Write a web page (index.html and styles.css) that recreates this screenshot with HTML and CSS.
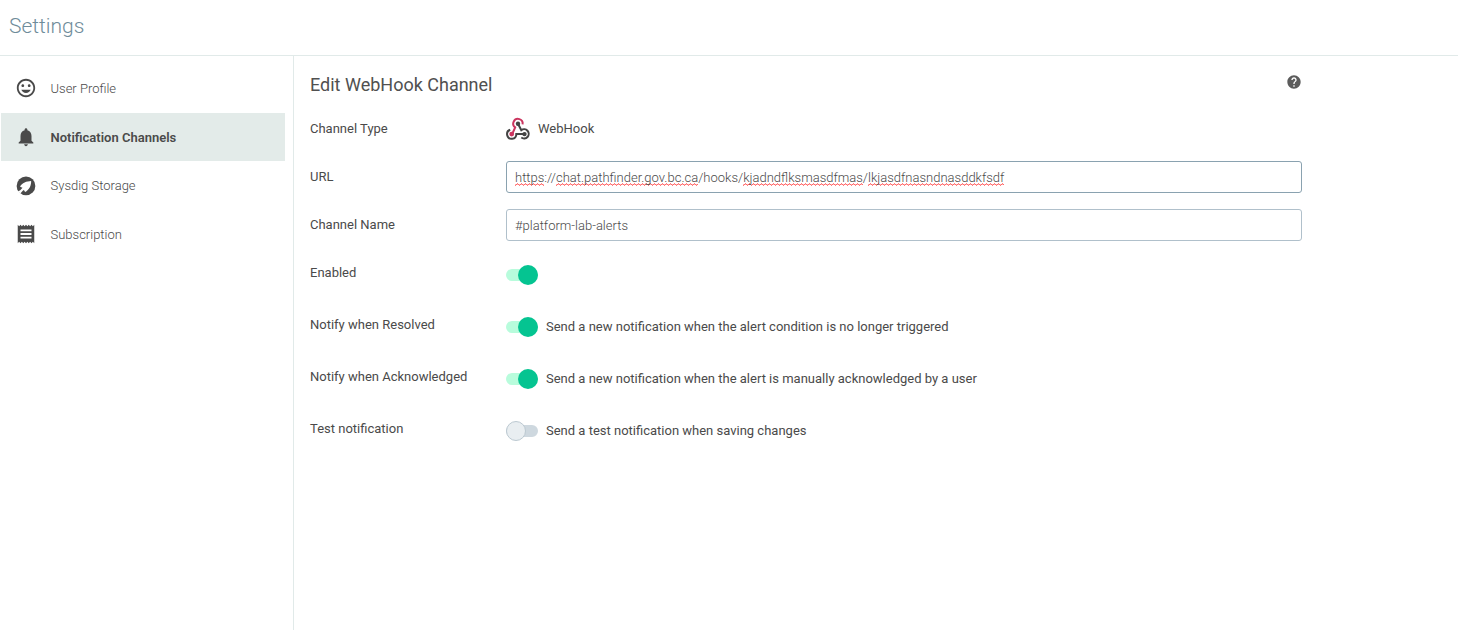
FILE: index.html
```html
<!DOCTYPE html>
<html lang="en">
<head>
<meta charset="utf-8">
<title>Settings</title>
<link rel="stylesheet" href="styles.css">
</head>
<body>
<header class="header"><h1 class="header-title">Settings</h1></header>
<div class="layout">
  <nav class="sidebar">
    <a class="nav-item">
      <svg class="nav-icon" viewBox="0 0 24 24"><path d="M11.99 2C6.47 2 2 6.48 2 12s4.47 10 9.99 10C17.52 22 22 17.52 22 12S17.52 2 11.99 2zM12 20c-4.42 0-8-3.58-8-8s3.58-8 8-8 8 3.58 8 8-3.58 8-8 8zm3.5-9c.83 0 1.5-.67 1.5-1.5S16.330 8 15.500 8 14 8.670 14 9.500s.67 1.500 1.500 1.500zm-7 0c.83 0 1.500-.67 1.500-1.500S9.330 8 8.500 8 7 8.670 7 9.500 7.670 11 8.500 11zM12 17.500c2.330 0 4.310-1.460 5.110-3.500H6.890c.8 2.040 2.780 3.500 5.110 3.500z"/></svg>
      <span class="nav-text">User Profile</span>
    </a>
    <a class="nav-item nav-item-active">
      <svg class="nav-icon" viewBox="0 0 24 24"><path d="M12 22c1.100 0 2-.9 2-2h-4c0 1.100.89 2 2 2zm6-6v-5c0-3.070-1.640-5.640-4.500-6.320V4c0-.83-.67-1.500-1.500-1.500s-1.500.67-1.500 1.500v.68C7.630 5.360 6 7.920 6 11v5l-2 2v1h16v-1l-2-2z"/></svg>
      <span class="nav-text">Notification Channels</span>
    </a>
    <a class="nav-item">
      <svg class="nav-icon" viewBox="0 0 24 24"><circle cx="12" cy="13" r="10.200"/><path class="cutout" d="M17.600 7.600C12.700 7.800 7.600 9.500 5.500 13.800L8.200 14.900 5.700 17.800 3.100 19 5.800 21.200 8.500 18.300 9.700 17.500 11 19.700C15.500 17.300 17.800 12.500 17.600 7.600z"/></svg>
      <span class="nav-text">Sysdig Storage</span>
    </a>
    <a class="nav-item">
      <svg class="nav-icon" viewBox="0 0 24 24"><path d="M18 17H6v-2h12v2zm0-4H6v-2h12v2zm0-4H6V7h12v2zM3 22l1.500-1.500L6 22l1.500-1.500L9 22l1.500-1.500L12 22l1.500-1.500L15 22l1.500-1.500L18 22l1.500-1.500L21 22V2l-1.500 1.500L18 2l-1.500 1.500L15 2l-1.500 1.500L12 2l-1.500 1.500L9 2 7.500 3.500 6 2 4.500 3.500 3 2v20z"/></svg>
      <span class="nav-text">Subscription</span>
    </a>
  </nav>
  <main class="content">
    <div class="content-head">
      <h2 class="content-title">Edit WebHook Channel</h2>
      <svg class="help-icon" viewBox="0 0 24 24"><path d="M12 2C6.480 2 2 6.480 2 12s4.480 10 10 10 10-4.480 10-10S17.520 2 12 2zm1 17h-2v-2h2v2zm2.070-7.750l-.9.920C13.450 12.900 13 13.500 13 15h-2v-.5c0-1.100.45-2.100 1.170-2.830l1.240-1.260c.37-.36.59-.86.59-1.410 0-1.100-.9-2-2-2s-2 .9-2 2H8c0-2.210 1.790-4 4-4s4 1.790 4 4c0 .88-.36 1.680-.93 2.250z"/></svg>
    </div>
    <div class="row">
      <div class="label">Channel Type</div>
      <div class="channel-type">
        <svg class="webhook-icon" viewBox="0 0 24 24">
          <path class="hook-pink" d="M16.600 6.300A4.700 4.700 0 1 0 9.200 9.400L6.200 16"/>
          <path class="hook-dark" d="M12 5.700L15.300 12.200A4.600 4.600 0 1 1 15.300 19.500"/>
          <path class="hook-dark" d="M4.200 11.800A4.600 4.600 0 1 0 10.300 16.100H18.500"/>
          <circle class="node-dark" cx="12" cy="5.700" r="2.200"/>
          <circle class="node-pink" cx="5.700" cy="16.100" r="2.400"/>
          <circle class="node-dark" cx="18.500" cy="16.100" r="2.200"/>
        </svg>
        <span>WebHook</span>
      </div>
    </div>
    <div class="row">
      <div class="label">URL</div>
      <div class="field field-focused"><span class="misspelled">https</span>://<span class="misspelled">chat.pathfinder.gov.bc.ca</span>/hooks/<span class="misspelled">kjadndflksmasdfmas</span>/<span class="misspelled">lkjasdfnasndnasddkfsdf</span></div>
    </div>
    <div class="row">
      <div class="label">Channel Name</div>
      <div class="field">#platform-lab-alerts</div>
    </div>
    <div class="row row-toggle">
      <div class="label">Enabled</div>
      <div class="toggle-line"><span class="toggle toggle-on"><span class="knob"></span></span></div>
    </div>
    <div class="row row-toggle">
      <div class="label">Notify when Resolved</div>
      <div class="toggle-line"><span class="toggle toggle-on"><span class="knob"></span></span><span>Send a new notification when the alert condition is no longer triggered</span></div>
    </div>
    <div class="row row-toggle">
      <div class="label">Notify when Acknowledged</div>
      <div class="toggle-line"><span class="toggle toggle-on"><span class="knob"></span></span><span>Send a new notification when the alert is manually acknowledged by a user</span></div>
    </div>
    <div class="row row-toggle">
      <div class="label">Test notification</div>
      <div class="toggle-line"><span class="toggle"><span class="knob"></span></span><span>Send a test notification when saving changes</span></div>
    </div>
  </main>
</div>
</body>
</html>
```
FILE: styles.css
```css
* { box-sizing: border-box; }
body {
  margin: 0;
  height: 100vh;
  display: flex;
  flex-direction: column;
  overflow: hidden;
  background: #fff;
  color: #4a4a4a;
  font-family: Roboto, sans-serif;
  font-size: 13px;
  line-height: 20px;
}
.header {
  height: 56px;
  flex: none;
  padding: 12px 9px 0;
  border-bottom: 1px solid #e1eae9;
}
.header-title {
  margin: 0;
  font-size: 21px;
  line-height: 28px;
  font-weight: 300;
  color: #6f8c9a;
}
.layout { flex: 1; display: flex; min-height: 0; }
.sidebar {
  width: 294px;
  flex: none;
  padding: 8px 8px 0 1px;
  border-right: 1px solid #e1eae9;
}
.nav-item {
  display: flex;
  align-items: center;
  height: 48px;
  margin-bottom: 0.7px;
  padding-left: 14px;
  gap: 13.500px;
  font-weight: 300;
}
.nav-item-active { background: #e3ebe9; font-weight: 600; }
.nav-text { padding-top: 2px; }
.nav-icon { width: 22px; height: 22px; fill: #4a4a4a; }
.cutout { fill: #fff; }
.content { width: 1008px; padding: 16px 0 0 16px; }
.content-head {
  display: flex;
  justify-content: space-between;
  height: 47px;
}
.content-title { margin: 0; font-size: 18px; line-height: 26px; font-weight: 400; color: #505050; }
.help-icon { width: 16px; height: 16px; margin-top: 2px; fill: #5c5c5c; }
.row { display: flex; height: 48px; }
.row-toggle { height: 52px; }
.label { width: 196px; flex: none; }
.channel-type { display: flex; gap: 8px; }
.webhook-icon { width: 24px; height: 24px; margin-top: -1px; overflow: visible; }
.hook-pink, .hook-dark { fill: none; stroke-width: 2; }
.hook-pink { stroke: #cb355f; }
.hook-dark { stroke: #444; }
.node-pink { fill: #cb355f; }
.node-dark { fill: #444; }
.field {
  flex: 1;
  height: 32px;
  margin-top: -6px;
  padding: 6px 8px 4px;
  border: 1px solid #b0c0cb;
  border-radius: 3px;
  font-weight: 300;
  white-space: nowrap;
}
.field-focused { border-color: #8aa2b0; }
.misspelled {
  padding-bottom: 1px;
  background-image:
    linear-gradient(90deg, #ff8080 1px, transparent 1px),
    linear-gradient(90deg, #ff6868 1px, #ffb0b0 1px),
    linear-gradient(90deg, #ff8080 1px, transparent 1px);
  background-size: 4px 1px, 2px 1px, 4px 1px;
  background-position: 0 100%, 1px calc(100% - 1px), 2px calc(100% - 2px);
  background-repeat: repeat-x;
}
.toggle-line { display: flex; align-items: center; gap: 8px; height: 20px; margin-top: 2px; }
.toggle {
  display: flex;
  align-items: center;
  width: 32px;
  height: 12px;
  border-radius: 6px;
  background: #ced8df;
}
.toggle-on { justify-content: flex-end; background: #b8fcdc; }
.knob {
  width: 20px;
  height: 20px;
  flex: none;
  border: 1px solid #bcc9d1;
  border-radius: 50%;
  background: #e9eef1;
}
.toggle-on .knob { border: 0; background: #05c491; }
```
